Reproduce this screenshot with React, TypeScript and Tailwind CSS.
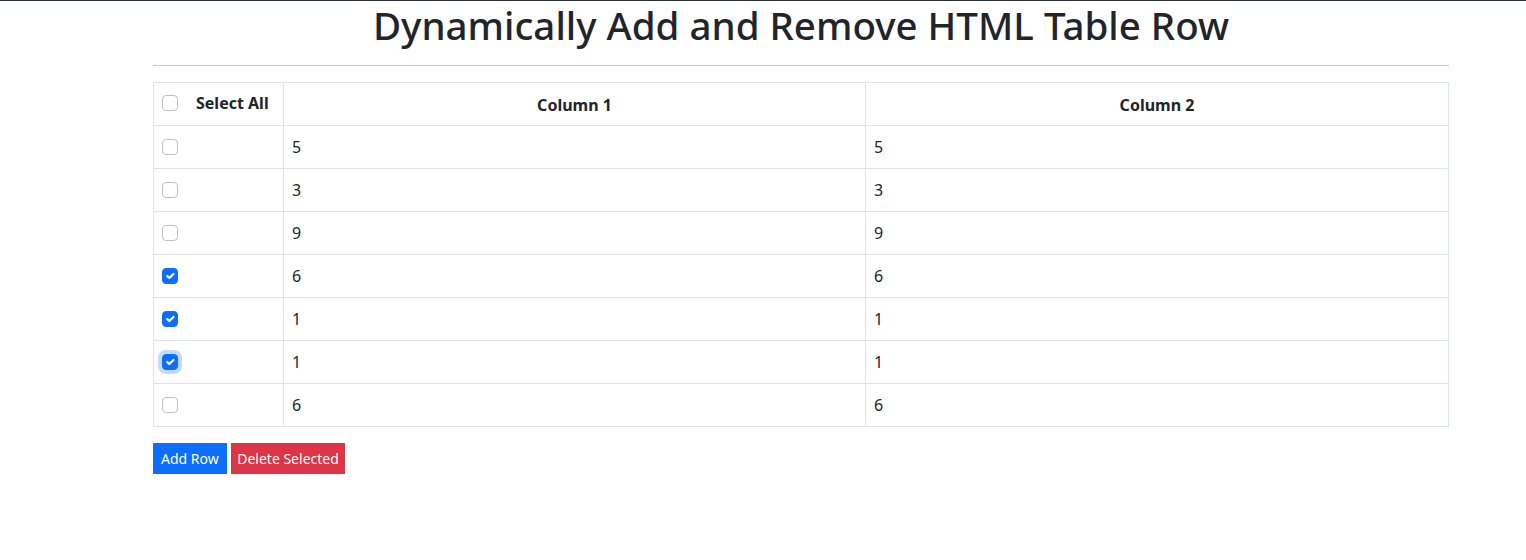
import { useState } from "react";

type Row = { id: number; a: number; b: number };

const initialRows: Row[] = [
  { id: 1, a: 5, b: 5 },
  { id: 2, a: 3, b: 3 },
  { id: 3, a: 9, b: 9 },
  { id: 4, a: 6, b: 6 },
  { id: 5, a: 1, b: 1 },
  { id: 6, a: 1, b: 1 },
  { id: 7, a: 6, b: 6 },
];

function Check({
  checked,
  focused,
  onClick,
}: {
  checked: boolean;
  focused?: boolean;
  onClick: () => void;
}) {
  return (
    <button
      type="button"
      role="checkbox"
      aria-checked={checked}
      onClick={onClick}
      className={
        "flex size-4 shrink-0 items-center justify-center rounded-[4px] border " +
        (checked ? "border-[#0d6efd] bg-[#0d6efd] " : "border-[#c1c1c1] bg-white ") +
        (focused ? "ring-4 ring-[#0d6efd]/25" : "")
      }
    >
      {checked && (
        <svg viewBox="0 0 20 20" className="size-[14px]" fill="none">
          <path
            d="m6 10 3 3 6-6"
            stroke="#fff"
            strokeWidth="3"
            strokeLinecap="round"
            strokeLinejoin="round"
          />
        </svg>
      )}
    </button>
  );
}

export default function App() {
  const [rows, setRows] = useState<Row[]>(initialRows);
  const [selected, setSelected] = useState<number[]>([4, 5, 6]);
  const [focused, setFocused] = useState<number | null>(6);

  const allChecked = rows.length > 0 && rows.every((r) => selected.includes(r.id));

  const toggle = (id: number) => {
    setFocused(id);
    setSelected((s) => (s.includes(id) ? s.filter((x) => x !== id) : [...s, id]));
  };

  const toggleAll = () => {
    setFocused(null);
    setSelected(allChecked ? [] : rows.map((r) => r.id));
  };

  const addRow = () => {
    const n = Math.floor(Math.random() * 10);
    const id = Math.max(0, ...rows.map((r) => r.id)) + 1;
    setRows([...rows, { id, a: n, b: n }]);
  };

  const deleteSelected = () => {
    setRows(rows.filter((r) => !selected.includes(r.id)));
    setSelected([]);
    setFocused(null);
  };

  return (
    <div className="min-h-[560px] border-t border-[#2b2f36] bg-white font-['Noto_Sans',sans-serif] text-base text-[#212529]">
      <div className="ml-[153px] w-[1296px]">
        <h1 className="h-12 text-center text-[38.5px] leading-[48px] font-medium">
          Dynamically Add and Remove HTML Table Row
        </h1>
        <hr className="my-4 border-[#c8c9ca]" />

        <table className="mb-4 w-full table-fixed border-collapse">
          <colgroup>
            <col className="w-[130px]" />
            <col className="w-[582px]" />
            <col />
          </colgroup>
          <thead>
            <tr className="h-[43px]">
              <th className="border border-[#dee2e6] px-2 pb-[2px] align-middle">
                <div className="flex items-center gap-[18px]">
                  <Check checked={allChecked} onClick={toggleAll} />
                  <span className="font-bold">Select All</span>
                </div>
              </th>
              <th className="border border-[#dee2e6] px-2 pt-[2px] text-center align-middle font-bold">
                Column 1
              </th>
              <th className="border border-[#dee2e6] px-2 pt-[2px] text-center align-middle font-bold">
                Column 2
              </th>
            </tr>
          </thead>
          <tbody>
            {rows.map((r) => (
              <tr key={r.id} className="h-[43px]">
                <td className="border border-[#dee2e6] px-2 align-middle">
                  <Check
                    checked={selected.includes(r.id)}
                    focused={focused === r.id}
                    onClick={() => toggle(r.id)}
                  />
                </td>
                <td className="border border-[#dee2e6] px-2 align-middle">{r.a}</td>
                <td className="border border-[#dee2e6] px-2 align-middle">{r.b}</td>
              </tr>
            ))}
          </tbody>
        </table>

        <div className="flex gap-1">
          <button
            type="button"
            onClick={addRow}
            className="h-[31px] bg-[#0d6efd] px-2 text-sm text-white"
          >
            Add Row
          </button>
          <button
            type="button"
            onClick={deleteSelected}
            className="h-[31px] bg-[#dc3545] px-[6.5px] text-sm text-white"
          >
            Delete Selected
          </button>
        </div>
      </div>
    </div>
  );
}
